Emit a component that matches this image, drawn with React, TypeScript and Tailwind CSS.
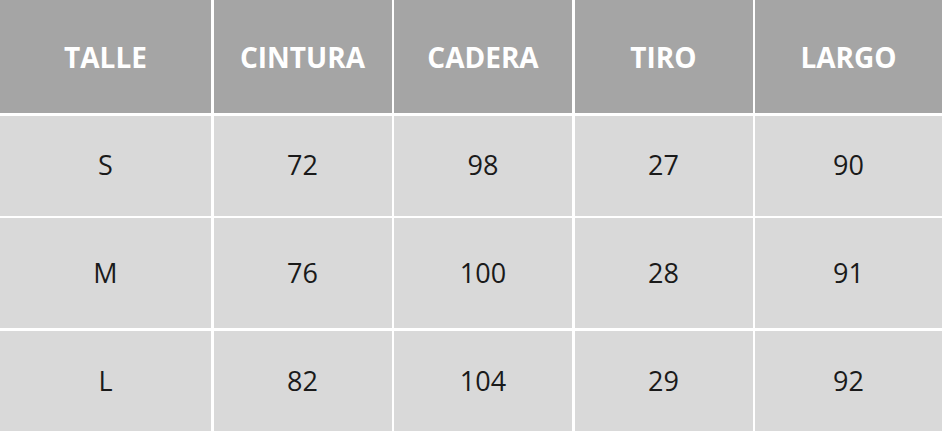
const headers = ["TALLE", "CINTURA", "CADERA", "TIRO", "LARGO"];

const rows = [
  ["S", "72", "98", "27", "90"],
  ["M", "76", "100", "28", "91"],
  ["L", "82", "104", "29", "92"],
];

export default function App() {
  return (
    <div className="h-[431px] w-[942px] overflow-hidden bg-white font-['Open_Sans',sans-serif]">
      <div className="grid h-full grid-cols-[211px_178px_178px_178px_1fr] grid-rows-[113px_100px_110px_1fr] gap-x-[2.5px] gap-y-[2.5px]">
        {headers.map((h) => (
          <div key={h} className="flex items-center justify-center bg-[#a5a5a5] text-[28px] font-bold text-white">
            {h}
          </div>
        ))}
        {rows.map((r) =>
          r.map((c, i) => (
            <div key={r[0] + i} className="flex items-center justify-center bg-[#d9d9d9] text-[27px] text-[#1a1a1a]">
              {c}
            </div>
          ))
        )}
      </div>
    </div>
  );
}
